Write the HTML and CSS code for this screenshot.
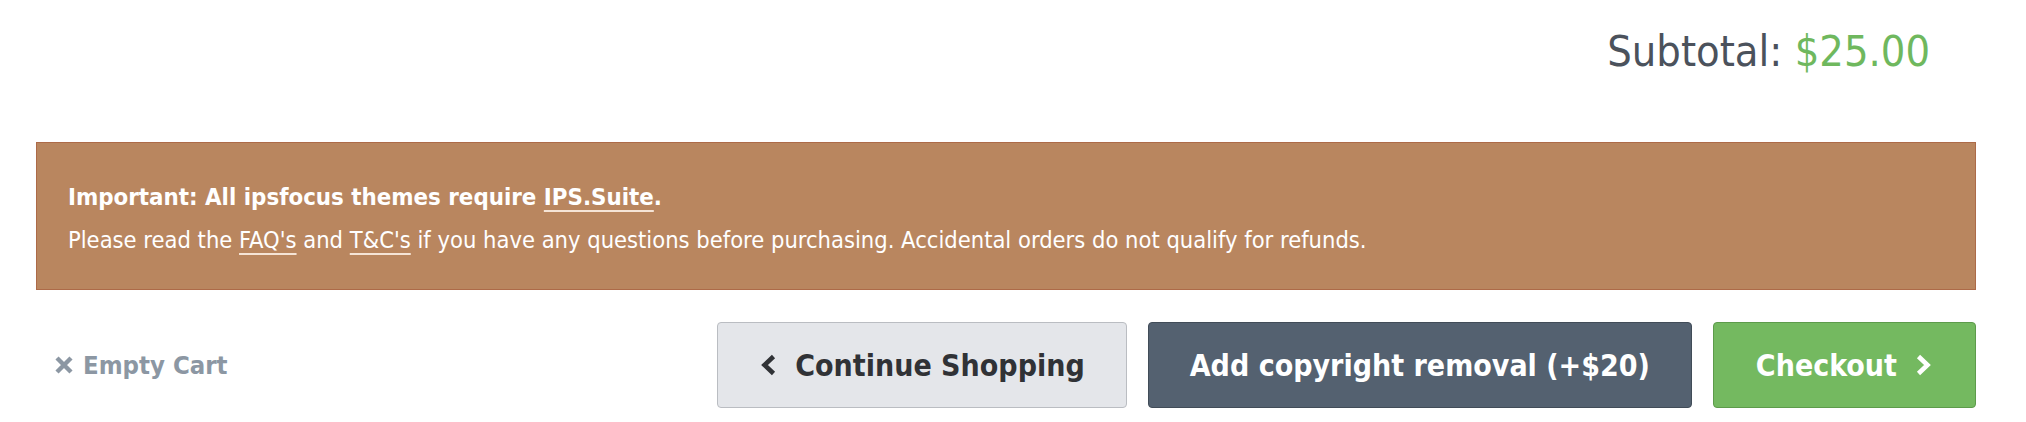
FILE: index.html
```html
<!DOCTYPE html>
<html lang="en">
<head>
<meta charset="utf-8">
<title>Cart</title>
<link rel="stylesheet" href="styles.css">
</head>
<body>
<div class="cart">
  <div class="subtotal">
    <span class="subtotal-label">Subtotal:</span>
    <span class="subtotal-price">$25.00</span>
  </div>
  <div class="notice">
    <p class="notice-title">Important: All ipsfocus themes require <a href="#">IPS.Suite</a>.</p>
    <p class="notice-text">Please read the <a href="#">FAQ's</a> and <a href="#">T&amp;C's</a> if you have any questions before purchasing. Accidental orders do not qualify for refunds.</p>
  </div>
  <div class="actions">
    <a class="empty-cart" href="#">
      <svg class="icon-x" viewBox="0 0 18 18" width="18" height="18" aria-hidden="true"><path d="M2 2 L16 16 M16 2 L2 16" stroke="currentColor" stroke-width="4.4" stroke-linecap="butt" fill="none"/></svg>
      <span>Empty Cart</span>
    </a>
    <div class="buttons">
      <a class="btn btn-light" href="#">
        <svg class="chev" viewBox="0 0 18 22" width="18" height="22" aria-hidden="true"><path d="M14.5 2.5 L5.5 11 L14.5 19.5" stroke="currentColor" stroke-width="4.6" fill="none"/></svg>
        <span>Continue Shopping</span>
      </a>
      <a class="btn btn-dark" href="#"><span>Add copyright removal (+$20)</span></a>
      <a class="btn btn-green" href="#">
        <span>Checkout</span>
        <svg class="chev" viewBox="0 0 18 22" width="18" height="22" aria-hidden="true"><path d="M3.5 2.5 L12.5 11 L3.5 19.5" stroke="currentColor" stroke-width="4.6" fill="none"/></svg>
      </a>
    </div>
  </div>
</div>
</body>
</html>
```

FILE: styles.css
```css
html, body {
  margin: 0;
  padding: 0;
  background: #ffffff;
}

body {
  font-family: "DejaVu Sans Condensed", "DejaVu Sans", "Liberation Sans", sans-serif;
  font-stretch: condensed;
}

.cart {
  padding: 26px 50px 0 36px;
}

.subtotal {
  text-align: right;
  padding-right: 46px;
  font-size: 43px;
  line-height: 50px;
  height: 50px;
  margin-bottom: 66px;
}

.subtotal-label {
  color: #4b525c;
}

.subtotal-price {
  color: #6fb85e;
}

.notice {
  background: #b9865f;
  border: 1px solid #ad6a48;
  padding: 38px 31px 33px 31px;
  color: #ffffff;
  font-size: 23.5px;
  line-height: 32px;
}

.notice p {
  margin: 0;
}

.notice-title {
  font-weight: bold;
  font-size: 23.8px;
}

.notice-text {
  margin-top: 11px !important;
}

.notice a {
  color: #ffffff;
  text-decoration: underline;
  text-decoration-color: rgba(255, 245, 235, 0.85);
  text-decoration-thickness: 2px;
  text-underline-offset: 5px;
}

.actions {
  display: flex;
  justify-content: space-between;
  align-items: center;
  margin-top: 32px;
}

.empty-cart {
  display: flex;
  align-items: center;
  gap: 10px;
  margin-left: 19px;
  color: #8c97a3;
  font-weight: bold;
  font-size: 25.5px;
  text-decoration: none;
}

.icon-x {
  display: block;
}

.buttons {
  display: flex;
  gap: 21px;
}

.btn {
  box-sizing: border-box;
  height: 86px;
  display: flex;
  align-items: center;
  gap: 18px;
  padding: 0 41px;
  border: 1px solid transparent;
  border-radius: 4px;
  font-weight: bold;
  font-size: 30px;
  text-decoration: none;
  white-space: nowrap;
}

.chev {
  display: block;
}

.btn-light {
  background: #e4e6ea;
  border-color: #babdc2;
  color: #303236;
}

.btn-dark {
  background: #546170;
  border-color: #414c58;
  color: #ffffff;
}

.btn-green {
  background: #74b960;
  border-color: #5d9b4b;
  color: #ffffff;
  padding: 0 42px;
}
```
